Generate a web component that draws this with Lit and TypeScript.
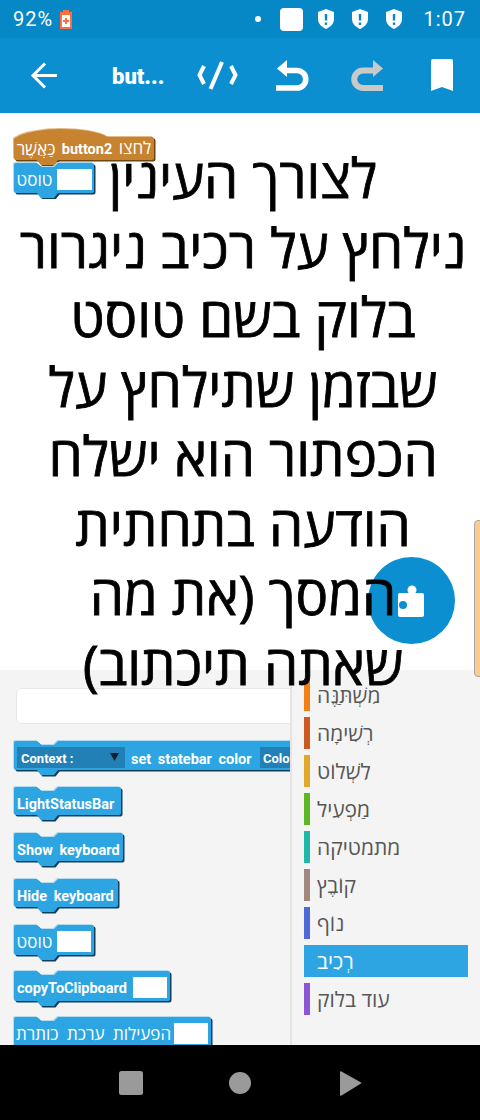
import { LitElement, html, svg, css } from "lit";
import { customElement } from "lit/decorators.js";

const BLUE = "#2ca5e2";
const BLUE_LIGHT = "#b4dbee";
const BLUE_DARK = "#0d3f5e";

// scratch style stack block, body from y=2 to y=h, tab below it
const stackPath = (w: number, h: number) =>
  `M2 4Q2 2 4 2H25l4 4H42l4-4H${w - 4}q2 0 2 2V${h - 2}q0 2-2 2H46l-4 5H29l-4-5H4Q2 ${h} 2 ${h - 2}Z`;

const hatPath = (w: number, h: number) =>
  `M2 12C18 -1 78 -1 96 10H${w - 4}q2 0 2 2V${h - 2}q0 2-2 2H46l-4 5H29l-4-5H4Q2 ${h} 2 ${h - 2}Z`;

const shape = (d: string, fill: string, light: string, dark: string) => svg`
  <path d=${d} fill=${light} transform="translate(-1 -1)"></path>
  <path d=${d} fill=${dark} transform="translate(1.5 1.5)"></path>
  <path d=${d} fill=${fill}></path>
`;

const field = (x: number, w: number) =>
  svg`<rect x=${x} y="8" width=${w} height="21" fill="#fff"></rect>`;

function block(w: number, label: string, fieldW = 0, fieldX = 0) {
  return html`<svg class="block" width=${w + 4} height="38" viewBox="0 0 ${w + 4} 38">
    ${shape(stackPath(w, fieldW ? 32 : 30), BLUE, BLUE_LIGHT, BLUE_DARK)}
    <text class="label" x="5" y="24">${label}</text>
    ${fieldW ? field(fieldX, fieldW) : ""}
  </svg>`;
}

function hebrewBlock(w: number, label: string, labelX: number, fieldW: number, fieldX: number) {
  return html`<svg class="block" width=${w + 4} height="38" viewBox="0 0 ${w + 4} 38">
    ${shape(stackPath(w, 32), BLUE, BLUE_LIGHT, BLUE_DARK)}
    <text class="label he" x=${labelX} y="25" text-anchor="middle">${label}</text>
    ${field(fieldX, fieldW)}
  </svg>`;
}

const categories = [
  { label: "מִשְׁתַּנֶּה", color: "#f38014" },
  { label: "רְשִׁימָה", color: "#cb5a22" },
  { label: "לִשְׁלוֹט", color: "#e0a82a" },
  { label: "מַפְעִיל", color: "#5cb723" },
  { label: "מתמטיקה", color: "#20b9a9" },
  { label: "קוֹבֶץ", color: "#a1887f" },
  { label: "נוֹף", color: "#4f6ad8" },
  { label: "רְכִיב", color: BLUE, selected: true },
  { label: "עוד בלוק", color: "#8e54d6" },
];

const poem = [
  "לצורך העינין",
  "נילחץ על רכיב ניגרור",
  "בלוק בשם טוסט",
  "שבזמן שתילחץ על",
  "הכפתור הוא ישלח",
  "הודעה בתחתית",
  "המסך (את מה",
  "שאתה תיכתוב)",
];

const shield = html`<svg width="16" height="20" viewBox="0 0 16 20">
  <path d="M8 0 16 3V10C16 15 12 18 8 20 4 18 0 15 0 10V3Z" fill="#fff"></path>
  <rect x="6.8" y="5" width="2.4" height="6.5" fill="#0687c6"></rect>
  <rect x="6.8" y="13.5" width="2.4" height="2.4" fill="#0687c6"></rect>
</svg>`;

@customElement("app-root")
export class AppRoot extends LitElement {
  static styles = css`
    :host {
      display: flex;
      flex-direction: column;
      width: 480px;
      height: 1120px;
      overflow: hidden;
      font-family: Roboto, "Liberation Sans", sans-serif;
    }

    .status {
      height: 38px;
      background: #0687c6;
      color: #fff;
      font-size: 20px;
      display: flex;
      align-items: center;
      padding: 0 14px 0 13px;
    }
    .status .pct { letter-spacing: 1px; margin-right: 7px; }
    .status .icons {
      margin-left: auto;
      display: flex;
      align-items: center;
    }
    .dot { width: 6px; height: 6px; border-radius: 50%; background: #fff; margin-right: 19px; }
    .sq { width: 23px; height: 23px; border-radius: 4px; background: #fff; margin-right: 15px; }
    .icons svg { margin-right: 18px; }
    .icons svg:nth-of-type(3) { margin-right: 21px; }
    .time { letter-spacing: 1px; }

    .toolbar {
      height: 75px;
      background: #0b8fd1;
      flex: none;
    }
    .toolbar svg { display: block; }

    .workspace {
      position: relative;
      z-index: 2;
      height: 557px;
      flex: none;
      background: #fff;
      padding-top: 30px;
      box-sizing: border-box;
    }
    .fab {
      position: absolute;
      left: 368px;
      top: 444px;
      width: 87px;
      height: 87px;
      border-radius: 50%;
      background: #0b8fd1;
    }
    .poem {
      position: relative;
      margin: 0;
      padding-left: 6px;
      direction: rtl;
      text-align: center;
      font-family: "Open Sans", "Liberation Sans", sans-serif;
      font-size: 54.5px;
      line-height: 69.5px;
      color: #000;
      -webkit-text-stroke: 0.8px #000;
    }
    .poem div { white-space: nowrap; }
    .canvas-block { position: absolute; display: block; }
    .scroll {
      position: absolute;
      left: 474px;
      top: 407px;
      width: 10px;
      height: 157px;
      border-radius: 4px;
      background: #f9cd8f;
      border: 1px solid #a9a9a9;
      box-sizing: border-box;
    }

    .flyout {
      height: 375px;
      flex: none;
      background: #f4f4f4;
      display: grid;
      grid-template-columns: 290px 188px;
      column-gap: 2px;
    }
    .blocks {
      overflow: hidden;
      padding: 18px 0 0 12px;
      display: flex;
      flex-direction: column;
      gap: 8px;
      box-shadow: 2px 0 0 #e4e4e4;
    }
    .search {
      flex: none;
      height: 36px;
      margin: 0 -4px 7px 4px;
      background: #fff;
      border: 1px solid #e8e8e8;
      border-radius: 5px;
      box-sizing: border-box;
    }
    .block { display: block; flex: none; overflow: visible; }
    .label {
      font-family: Roboto, sans-serif;
      font-weight: 700;
      font-size: 14.5px;
      fill: #fff;
      word-spacing: 3px;
    }
    .he {
      direction: rtl;
      font-family: "Open Sans", "Liberation Sans", sans-serif;
      font-size: 17px;
      font-weight: 500;
      word-spacing: 4px;
    }
    .hat { font-size: 17px; }
    .name { font-size: 14.5px; }
    .ctx-text { font-family: Roboto, sans-serif; font-weight: 700; font-size: 13px; fill: #fff; }

    .cats {
      padding: 9px 12px 0 12px;
      display: flex;
      flex-direction: column;
      gap: 6px;
    }
    .cat {
      height: 32px;
      display: flex;
      align-items: center;
      gap: 7px;
      font-family: "Open Sans", "Liberation Sans", sans-serif;
      font-size: 21px;
      color: #575757;
    }
    .cat i { width: 6px; height: 32px; flex: none; }
    .cat.selected { background: #2ca5e2; color: #fff; }

    .nav {
      height: 75px;
      flex: none;
      background: #000;
      display: flex;
      justify-content: center;
    }
  `;

  render() {
    return html`
      <div class="status">
        <span class="pct">92%</span>
        <svg width="12" height="19" viewBox="0 0 12 19">
          <rect x="3" width="6" height="3" fill="#ff6e40"></rect>
          <rect y="2" width="12" height="17" fill="#ff6e40"></rect>
          <rect x="2" y="5" width="8" height="12" fill="#fff"></rect>
          <path d="M5 8h2v2h2v2H7v2H5v-2H3v-2h2Z" fill="#ff6e40"></path>
        </svg>
        <div class="icons">
          <span class="dot"></span>
          <span class="sq"></span>
          ${shield}${shield}${shield}
          <span class="time">1:07</span>
        </div>
      </div>

      <div class="toolbar">
        <svg width="480" height="75" viewBox="0 38 480 75" fill="none" stroke="#fff" stroke-width="3">
          <path d="M57 75.500H34M45 63.500 33 75.500 45 87.500"></path>
          <text x="112" y="84" fill="#fff" stroke="none" font-family="Roboto" font-weight="900" font-size="22">but...</text>
          <path d="M204 66 199.500 75 204 84M231 66 235.500 75 231 84M222 62 210.500 89" stroke-width="4"></path>
          <path d="M286 70.500H297a8.750 8.750 0 0 1 0 17.500H276" stroke-width="5.600"></path>
          <path d="M287 60V77L277 68.500Z" fill="#fff" stroke="none"></path>
          <path d="M373 70.500H363a8.750 8.750 0 0 0 0 17.500H383" stroke="#c9c9c9" stroke-width="6"></path>
          <path d="M373 60V77L383 68.500Z" fill="#c9c9c9" stroke="none"></path>
          <path d="M431 61q0-2 2-2h18q2 0 2 2v30l-11-4-11 4Z" fill="#fff" stroke="none"></path>
        </svg>
      </div>

      <div class="workspace">
        <div class="fab">
          <svg width="87" height="87" viewBox="368 557 87 87">
            <circle cx="412" cy="590" r="4.500" fill="#fff"></circle>
            <rect x="398" y="593" width="26" height="24" rx="2" fill="#fff"></rect>
            <circle cx="403" cy="605" r="4" fill="#0b8fd1"></circle>
          </svg>
        </div>
        <div class="poem">${poem.map((l) => html`<div>${l}</div>`)}</div>
        <svg class="canvas-block" style="left:12px;top:14px" width="150" height="42" viewBox="0 0 150 42">
          ${shape(hatPath(144, 33), "#c88330", "#e2bd8b", "#6e4413")}
          <text class="label he hat" x="24" y="28" text-anchor="middle">כַּאֲשֶׁר</text>
          <text class="label name" x="75" y="27" text-anchor="middle">button2</text>
          <text class="label he hat" x="123" y="27" text-anchor="middle">לחצו</text>
        </svg>
        <svg class="canvas-block" style="left:12px;top:48px" width="90" height="38" viewBox="0 0 90 38">
          ${shape(stackPath(84, 32), BLUE, BLUE_LIGHT, BLUE_DARK)}
          <text class="label he" x="22.5" y="25" text-anchor="middle">טוסט</text>
          ${field(45, 35)}
        </svg>
        <div class="scroll"></div>
      </div>

      <div class="flyout">
        <div class="blocks">
          <div class="search"></div>
          <svg class="block" width="278" height="38" viewBox="0 0 278 38" style="overflow:hidden">
            ${shape(stackPath(300, 31), BLUE, BLUE_LIGHT, BLUE_DARK)}
            <rect x="5" y="8" width="108" height="21" fill="#2280b6"></rect>
            <text class="ctx-text" x="9" y="24">Context :</text>
            <path d="M98 14h9l-4.500 8Z" fill="#0d2230"></path>
            <text class="label" x="119" y="25">set statebar color</text>
            <rect x="248" y="8" width="40" height="21" fill="#2280b6"></rect>
            <text class="ctx-text" x="251" y="24">Color</text>
          </svg>
          ${block(111, "LightStatusBar")}
          ${block(113, "Show keyboard")}
          ${block(108, "Hide keyboard")}
          ${hebrewBlock(84, "טוסט", 22.5, 34, 45)}
          ${block(160, "copyToClipboard", 34, 121)}
          ${hebrewBlock(201, "הפעילות ערכת כותרת", 81.5, 34, 162)}
        </div>
        <div class="cats">
          ${categories.map(
            (c) => html`<div class="cat ${c.selected ? "selected" : ""}">
              <i style="background:${c.color}"></i><span>${c.label}</span>
            </div>`
          )}
        </div>
      </div>

      <div class="nav">
        <svg width="480" height="75" viewBox="0 1045 480 75">
          <rect x="119" y="1071" width="24" height="24" rx="2.500" fill="#9a9a9a"></rect>
          <circle cx="240" cy="1083" r="11" fill="#9a9a9a"></circle>
          <path d="M340 1072q0-1 1.500-.5L361 1082.500q1 .5 0 1L341.500 1095.500q-1.500.5-1.500-.5Z" fill="#9a9a9a"></path>
        </svg>
      </div>
    `;
  }
}
